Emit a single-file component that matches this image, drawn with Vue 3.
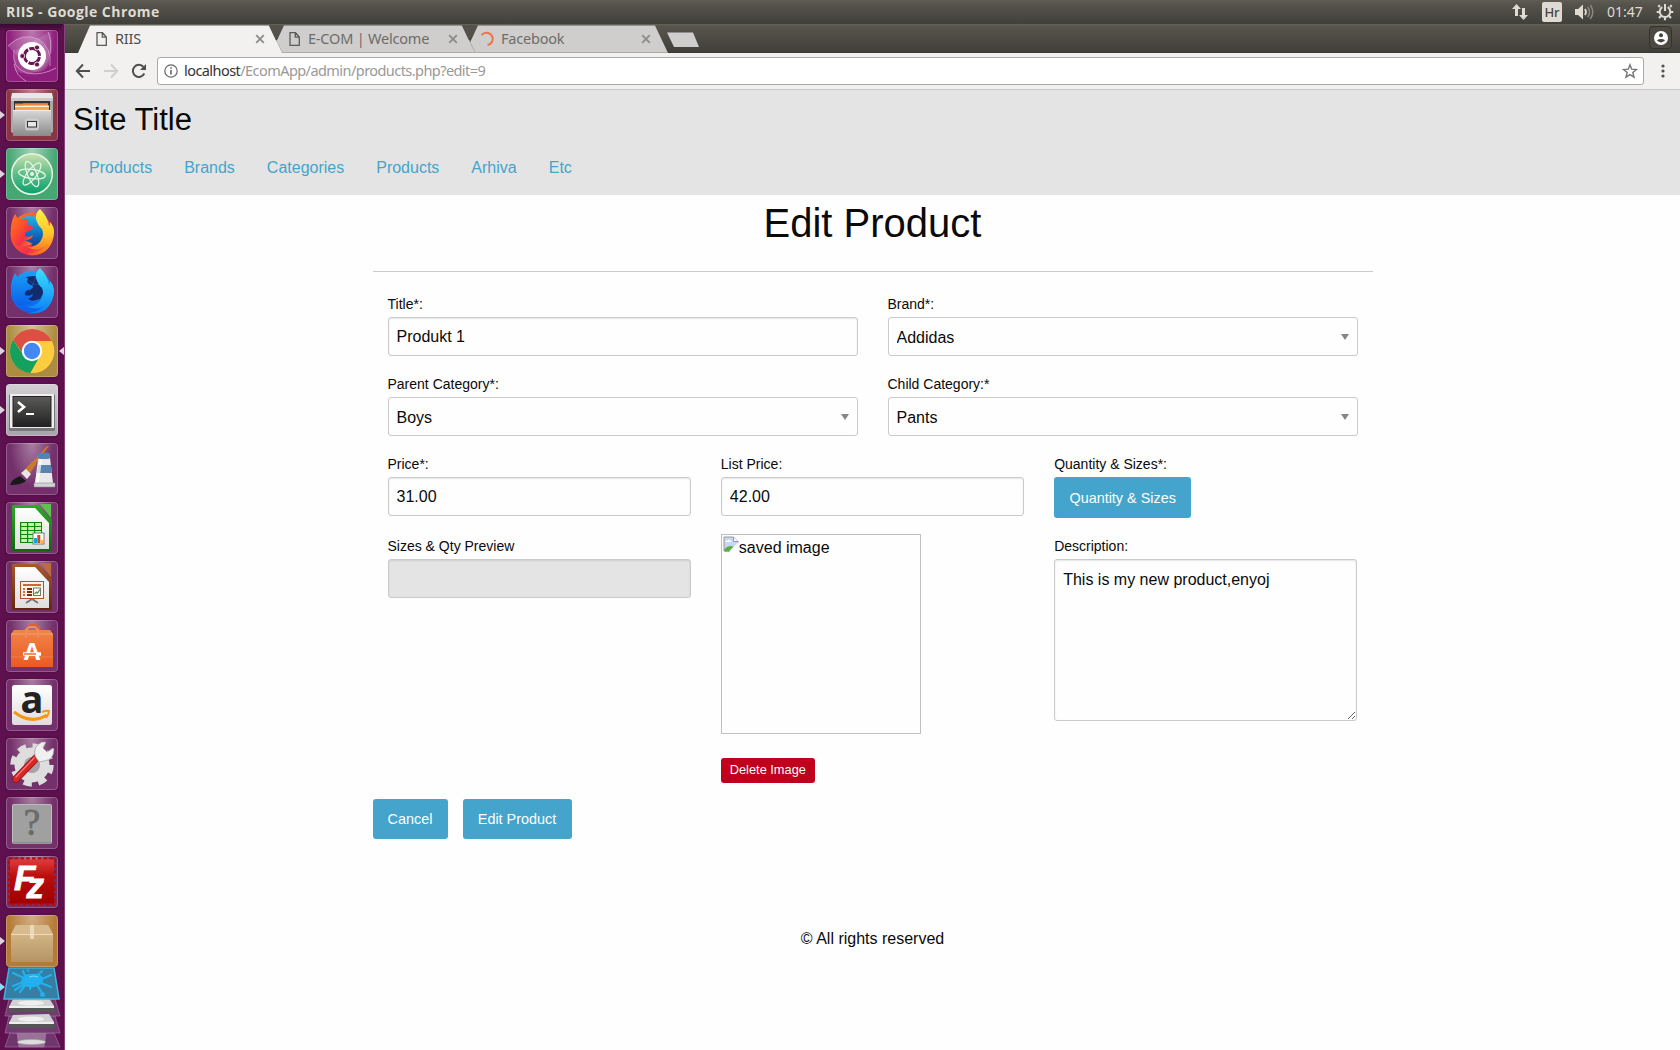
<script setup>
import { ref } from 'vue'

const tabs = [
  { title: 'RIIS', kind: 'page', active: true },
  { title: 'E-COM | Welcome', kind: 'page', active: false },
  { title: 'Facebook', kind: 'loading', active: false },
]
const nav = ['Products', 'Brands', 'Categories', 'Products', 'Arhiva', 'Etc']

const title = ref('Produkt 1')
const brand = ref('Addidas')
const parent = ref('Boys')
const child = ref('Pants')
const price = ref('31.00')
const listPrice = ref('42.00')
const sizes = ref('')
const description = ref('This is my new product,enyoj')
</script>

<template>
  <div class="desktop">
    <header class="panel">
      <span class="panel-title">RIIS - Google Chrome</span>
      <div class="indicators">
        <svg class="i-net" width="18" height="18" viewBox="0 0 18 18"><path d="M5.500 1 1 6h3v7h3V6h3zM12.500 17l4.500-5h-3V5h-3v7H8z" fill="#dfdbd2" /></svg>
        <span class="kbd">Hr</span>
        <svg class="i-vol" width="20" height="18" viewBox="0 0 20 18"><path d="M0 6h3l5-4.500v15L3 12H0z" fill="#dfdbd2" /><path d="M10 6q2 3 0 6" fill="none" stroke="#dfdbd2" stroke-width="1.800" /><path d="M12.700 4q3.600 5 0 10M15.300 2q5 7 0 14" fill="none" stroke="#8b887f" stroke-width="1.500" /></svg>
        <span class="clock">01:47</span>
        <svg class="i-gear" width="18" height="18" viewBox="0 0 18 18" fill="none" stroke="#dfdbd2"><path d="M6.300 4.200a5.300 5.300 0 1 0 5.400 0" stroke-width="2" /><path d="M9 1v7" stroke-width="2" /><path d="M3.900 3.900 2.300 2.300M14.100 3.900l1.600-1.600M3.500 9H.7M14.500 9h2.800M5 13l-2 2M13 13l2 2M9 14.500v2.800" stroke-width="2.200" /></svg>
      </div>
    </header>

    <div class="body">
      <aside class="launcher">
        <svg class="defs" width="0" height="0">
          <defs>
            <linearGradient id="silver" x1="0" y1="0" x2="0" y2="1"><stop offset="0" stop-color="#d8d8d8" /><stop offset="1" stop-color="#8a8a8a" /></linearGradient>
            <linearGradient id="atom" x1="0" y1="0" x2="0" y2="1"><stop offset="0" stop-color="#c9e2ae" /><stop offset=".5" stop-color="#5dbd88" /><stop offset="1" stop-color="#08a06e" /></linearGradient>
            <linearGradient id="fox" x1="0" y1="0" x2=".9" y2="1"><stop offset="0" stop-color="#ff7a2c" /><stop offset=".45" stop-color="#ff4f2a" /><stop offset=".7" stop-color="#f2304b" /><stop offset="1" stop-color="#ff8a20" /></linearGradient>
            <linearGradient id="flame" x1="0" y1="0" x2="0" y2="1"><stop offset="0" stop-color="#fff14a" /><stop offset=".55" stop-color="#ffc426" /><stop offset="1" stop-color="#ff6424" /></linearGradient>
            <linearGradient id="foxblue" x1="0" y1="0" x2="0" y2="1"><stop offset="0" stop-color="#1fb4ee" /><stop offset="1" stop-color="#0a3f9e" /></linearGradient>
            <linearGradient id="devfox" x1="0" y1="0" x2="0" y2="1"><stop offset="0" stop-color="#1a9df5" /><stop offset="1" stop-color="#0a5fe8" /></linearGradient>
            <linearGradient id="devflame" x1="0" y1="0" x2="0" y2="1"><stop offset="0" stop-color="#3be1fc" /><stop offset="1" stop-color="#0a7ff5" /></linearGradient>
            <linearGradient id="term" x1="0" y1="0" x2="0" y2="1"><stop offset="0" stop-color="#5a5a58" /><stop offset="1" stop-color="#222" /></linearGradient>
            <linearGradient id="calc" x1="0" y1="0" x2="0" y2="1"><stop offset="0" stop-color="#2fa82b" /><stop offset="1" stop-color="#0c6a0b" /></linearGradient>
            <linearGradient id="impress" x1="0" y1="0" x2="0" y2="1"><stop offset="0" stop-color="#a9592a" /><stop offset="1" stop-color="#63260b" /></linearGradient>
            <linearGradient id="bag" x1="0" y1="0" x2="0" y2="1"><stop offset="0" stop-color="#f08448" /><stop offset="1" stop-color="#ea5b22" /></linearGradient>
            <linearGradient id="paper" x1="0" y1="0" x2="0" y2="1"><stop offset="0" stop-color="#fff" /><stop offset="1" stop-color="#dedede" /></linearGradient>
            <linearGradient id="fz" x1="0" y1="0" x2="0" y2="1"><stop offset="0" stop-color="#e03a38" /><stop offset=".4" stop-color="#b80d0d" /><stop offset="1" stop-color="#a00000" /></linearGradient>
            <linearGradient id="box" x1="0" y1="0" x2="0" y2="1"><stop offset="0" stop-color="#dcbf90" /><stop offset="1" stop-color="#b59464" /></linearGradient>
            <radialGradient id="splash"><stop offset="0" stop-color="#2fb3ea" /><stop offset="1" stop-color="#1a9fe0" /></radialGradient>
          </defs>
        </svg>

        <div class="tile t-dash">
          <svg viewBox="0 0 52 52">
            <path d="M2 16Q16 2 32 10 45 18 43 34 37 45 26 41z" fill="#fff" opacity=".16" />
            <path d="M44 2Q50 24 38 37 24 48 10 41 5 30 10 20z" fill="#fff" opacity=".14" />
            <g fill="none" stroke="#f0cdea" stroke-opacity=".55"><path d="M2 16Q16 2 32 9 46 17 44 36" /><path d="M42 2Q46 10 44 24" /><path d="M8 20Q5 38 21 43 36 46 50 38" /><path d="M8 34Q10 46 20 51" /></g>
            <circle cx="26" cy="26" r="14" fill="#fff" />
            <circle cx="26" cy="26" r="7.500" fill="none" stroke="#681554" stroke-width="3" stroke-dasharray="14.200 1.500" transform="rotate(8 26 26)" />
            <g fill="#681554" stroke="#fff" stroke-width=".8"><circle cx="16.300" cy="26" r="2.500" /><circle cx="31" cy="17.500" r="2.500" /><circle cx="31" cy="34.500" r="2.500" /></g>
          </svg>
        </div>
        <div class="tile t-files run">
          <svg viewBox="0 0 52 52">
            <path d="M6 4h40l1 5H5z" fill="#e8e8e8" /><path d="M5 9h42v34l-2 1H7l-2-1z" fill="#aaa9a7" /><path d="M5 9h42v3H5z" fill="#c9c9c9" /><path d="M8 12h36v10H8z" fill="#333" />
            <path d="M17 14h25v3H17z" fill="#e0602a" /><path d="M9 14.500h33v2H9z" fill="#ef8440" /><path d="M9 16.500h34v1.500H9z" fill="#fff2da" /><path d="M9 18h34v3H9z" fill="#f6a552" />
            <path d="M7 21h38v26H7z" fill="url(#silver)" /><path d="M7 21.500h38" stroke="#eee" />
            <rect x="19.500" y="30" width="13" height="11" rx="2" fill="#c5c5c5" stroke="#ddd" stroke-width=".6" /><rect x="21.500" y="32.500" width="9" height="5.500" fill="#e8e8e8" stroke="#333" />
          </svg>
        </div>
        <div class="tile t-atom run">
          <svg viewBox="0 0 52 52">
            <circle cx="26" cy="26" r="20.300" fill="url(#atom)" stroke="#e9f3e4" stroke-width="1.500" />
            <g fill="none" stroke="#eaf6e8" stroke-width="1.200"><ellipse cx="26" cy="26" rx="13.500" ry="4.600" transform="rotate(8 26 26)" /><ellipse cx="26" cy="26" rx="13.500" ry="4.600" transform="rotate(67 26 26)" /><ellipse cx="26" cy="26" rx="13.500" ry="4.600" transform="rotate(127 26 26)" /></g>
            <circle cx="26" cy="26" r="2" fill="#eaf6e8" />
          </svg>
        </div>
        <div class="tile">
          <svg viewBox="0 0 52 52">
            <circle cx="26" cy="27" r="21.500" fill="url(#fox)" />
            <path d="M15 12l6-3 14 1 4 16-4 10-8 3-9-5-3-9z" fill="url(#foxblue)" />
            <path d="M9 7q2 4 5 6 4-2 8-1-2 4 1 6l4 2q0 3-5 4-4 2-3 5 4 2 8-1-1 5-8 5l8 4-14 3Q5 37 5 25q-1-9 4-18z" fill="url(#fox)" />
            <path d="M34 2q-5 4-4 10 2 7 6 10 3 7-3 14-5 5-12 4 10 5 17 0-7 7-17 7 18 4 25-12 5-13-2-20 0 3-1 4-1-9-9-17z" fill="url(#flame)" />
          </svg>
        </div>
        <div class="tile">
          <svg viewBox="0 0 52 52">
            <circle cx="26" cy="26" r="21" fill="url(#devfox)" />
            <path d="M17 13q7-5 16-2l5 15-4 7-8 2-9-5-3-9z" fill="#132a6c" />
            <path d="m20 12 7 6 9 1M27 18l-4 8M30 10l-3 8" fill="none" stroke="#2355a5" stroke-width=".7" />
            <path d="M9 7q2 4 5 6 4-2 8-1-2 4 1 6l4 2q0 3-5 4-4 2-3 5 4 2 8-1-1 5-8 5l8 4-14 3Q5 37 5 25q-1-9 4-18z" fill="url(#devfox)" />
            <path d="M34 2q-5 4-4 10 2 7 6 10 3 7-3 14-5 5-12 4 10 5 17 0-7 7-17 7 18 3 25-12 5-13-2-20 0 3-1 4-1-9-9-17z" fill="url(#devflame)" />
          </svg>
        </div>
        <div class="tile t-chrome run focus">
          <svg viewBox="0 0 52 52">
            <circle cx="26" cy="26" r="22" fill="#fdcc3f" />
            <path d="M7 15a22 22 0 0 1 38.700 1H26L18 30z" fill="#dd4f43" />
            <path d="M7 15a22 22 0 0 0 17.500 33L34 31l-15 1z" fill="#16a05d" />
            <path d="M26 16h19.700a22 22 0 0 1-21.200 32L35 30z" fill="#fdcc3f" />
            <circle cx="26" cy="26" r="10.200" fill="#fff" /><circle cx="26" cy="26" r="8.200" fill="#4587f0" />
          </svg>
        </div>
        <div class="tile t-term run">
          <svg viewBox="0 0 52 52">
            <rect x="3" y="10" width="46" height="37" rx="1.500" fill="#77777a" /><rect x="4" y="10" width="44" height="34" fill="#eee" /><rect x="7" y="12.500" width="38" height="30" fill="url(#term)" stroke="#222" />
            <path d="m12 18 6 5-6 5" fill="none" stroke="#fff" stroke-width="2.600" /><path d="M20 30h8" stroke="#fff" stroke-width="2" />
          </svg>
        </div>
        <div class="tile">
          <svg viewBox="0 0 52 52">
            <path d="M43 3 26 25l-3-2L41 3z" fill="#cc7a28" /><path d="M27 18l-9 9 5 5 7-11z" fill="#c77a2c" /><path d="M15 30l5-4 5 5-4 5z" fill="#e7e7e7" /><path d="M14 33l6 5q-5 4-16 4 2-6 10-9z" fill="#191919" />
            <path d="M33 15h11l3 25H29z" fill="#e9e9ec" /><rect x="32" y="10" width="12" height="6" rx="2" fill="#5583b3" /><path d="M32 22h13l1 8H31z" fill="#5783ae" /><path d="M32 16h4l-3 24h-4z" fill="#fff" opacity=".7" /><path d="M28 40h21v4H28z" fill="#d3d3d5" stroke="#8b8b8b" stroke-width=".6" />
          </svg>
        </div>
        <div class="tile">
          <svg viewBox="0 0 52 52">
            <path d="M7 3h25l14 15v29q0 2-2 2H8q-2 0-2-2V4z" fill="url(#calc)" /><path d="M34 2h11v14z" fill="#5fc152" /><path d="M9 6h20l14 15v26H9z" fill="url(#paper)" />
            <path d="M14 20h22v21H14z" fill="#0d860b" /><g fill="#c5f2a8"><path v-for="n in 15" :key="n" :d="`M${15.200 + ((n - 1) % 3) * 7} ${21 + Math.floor((n - 1) / 3) * 4}h5.800v3h-5.800z`" /></g>
            <rect x="27" y="31" width="11" height="11" fill="#fff" stroke="#777" /><path d="M28 36h3v5h-3z" fill="#15a0e0" /><path d="M31.300 33h3v8h-3z" fill="#d4491a" /><path d="M34.600 38h2.800v3h-2.800z" fill="#f3bb16" />
          </svg>
        </div>
        <div class="tile">
          <svg viewBox="0 0 52 52">
            <path d="M7 3h25l14 15v29q0 2-2 2H8q-2 0-2-2V4z" fill="url(#impress)" /><path d="M34 2h11v14z" fill="#bb6d3c" /><path d="M9 6h20l14 15v26H9z" fill="url(#paper)" />
            <path d="m20 42 6-4 6 4" fill="none" stroke="#777" stroke-width="2" /><rect x="14.500" y="20.500" width="23" height="17" fill="#fff4e8" stroke="#b25122" /><path d="M17 24h18" stroke="#cc6a33" stroke-width="2" />
            <path d="M17 28h2M17 31h2M17 34h2" stroke="#d46e30" stroke-width="2" /><path d="M21 28h5M21 31h5M21 34h5" stroke="#7a2e0c" stroke-width="2" /><rect x="27.500" y="27" width="7" height="7.500" fill="#fff" stroke="#777" /><path d="m28.500 33 2-2 1 1 2.500-3.500" fill="none" stroke="#2aa02a" stroke-width="1.200" />
          </svg>
        </div>
        <div class="tile">
          <svg viewBox="0 0 52 52">
            <path d="M22 13V7l3-2h5l3 2v6" fill="none" stroke="#d9623a" stroke-width="2.500" /><path d="M8 10h36l3 4v33H5V14z" fill="url(#bag)" /><path d="M5 14h42" stroke="#f5a26f" /><path d="M20 18V10l3-3h6l3 3v8" fill="none" stroke="#ef8a62" stroke-width="2.200" />
            <path d="M5 37h42" stroke="#f08a5c" stroke-width=".7" />
            <text x="26" y="39.500" text-anchor="middle" class="a-glyph">A</text><path d="M17 34h18" stroke="#fff" stroke-width="3.500" /><path d="M18 34h12" stroke="#ec642d" stroke-width="1.400" />
          </svg>
        </div>
        <div class="tile">
          <svg viewBox="0 0 52 52">
            <rect x="6" y="6" width="40" height="40" rx="2.500" fill="url(#paper)" />
            <text x="26" y="34" text-anchor="middle" class="amz-glyph">a</text>
            <path d="M8 33q17 13 33 3" fill="none" stroke="#f79514" stroke-width="3" /><path d="M36 33q5-2 7-1 0 3-3 7" fill="none" stroke="#f79514" stroke-width="2" />
          </svg>
        </div>
        <div class="tile">
          <svg viewBox="0 0 52 52">
            <circle cx="26" cy="27" r="18.500" fill="none" stroke="#dcdcdc" stroke-width="6.500" stroke-dasharray="8.100 6.430" /><circle cx="26" cy="27" r="12.500" fill="none" stroke="#dedede" stroke-width="10" /><circle cx="26" cy="27" r="8" fill="#a8a3a8" />
            <path d="M10 41 31 19" stroke="#8c1212" stroke-width="7.500" stroke-linecap="round" /><path d="M10 41 31 19" stroke="#d92626" stroke-width="6" stroke-linecap="round" /><path d="M10 39 28 20" stroke="#f08080" stroke-width="1.200" stroke-linecap="round" />
            <path d="M29 18q-2-10 7-14h4l-3 6 4 4 6-4 1 1q0 11-10 12l-5 1z" fill="#f0f0f0" stroke="#999" stroke-width=".7" />
          </svg>
        </div>
        <div class="tile">
          <svg viewBox="0 0 52 52"><rect x="6.500" y="7.500" width="39" height="39" rx="1" fill="#a0a0a0" stroke="#bcbcbc" /><path d="M7 46h38" stroke="#777" /><text x="26" y="38" text-anchor="middle" class="q-glyph">?</text></svg>
        </div>
        <div class="tile">
          <svg viewBox="0 0 52 52">
            <rect x="3" y="2.500" width="46" height="46" fill="none" stroke="#b50c0c" stroke-width="2.500" stroke-dasharray="3.500 2.250" /><rect x="4" y="3.500" width="44" height="44" fill="url(#fz)" />
            <text x="8" y="34" class="fz-glyph">F<tspan dx="-9" dy="8" class="z">z</tspan></text>
          </svg>
        </div>
        <div class="tile t-box run">
          <svg viewBox="0 0 52 52"><path d="M10 10h32l5 10v27H5V20z" fill="url(#box)" /><path d="M10 10h32l5 9H5z" fill="#d6bb91" /><path d="M5 19.500h42" stroke="#efd9b2" /><path d="M24 10h4v14h-4z" fill="#f1e3c8" opacity=".75" /></svg>
        </div>

        <svg class="stack" width="65" height="83" viewBox="0 0 65 83">
          <g stroke="#a87aa4" stroke-opacity=".6"><path d="M10 66h44l6 14H5z" fill="#6f356e" /><path d="M17 66h29l-2 14H19z" fill="#9a7299" /><ellipse cx="31.500" cy="75" rx="14" ry="2.500" fill="#ddd" stroke="#aaa" />
            <path d="M9 49h46l5 17H5z" fill="#713a70" /><path d="M9 32h46l5 17H5z" fill="#713a70" /></g>
          <g><path d="m13 32 36-1 5 8v4H9v-3z" fill="#d2d2d2" /><ellipse cx="31" cy="36" rx="13" ry="2.500" fill="#efefef" /><path d="M9 41h46v4H9z" fill="#555" /><path d="M9 40h45" stroke="#eee" stroke-width="2" />
            <path d="m13 48 36-1 5 8v4H9v-3z" fill="#d2d2d2" /><ellipse cx="31" cy="52" rx="13" ry="2.500" fill="#efefef" /><path d="M9 57h46v4H9z" fill="#555" /><path d="M9 56h45" stroke="#eee" stroke-width="2" /></g>
          <path d="M9 1h45l5 31H4z" fill="#347fa3" stroke="#3db6e6" stroke-width="1.500" />
          <path d="M24 9q4-3 14-2 6 2 5 7-2 5-9 6-9 1-12-3-2-5 2-8z" fill="#22b0ee" />
          <g fill="none" stroke="#22b0ee" stroke-width="2.200" stroke-linecap="round"><path d="M24 11 13 6M25 9l-2-5M38 8l4-4M42 12l9-4M41 16l10 4M37 18l5 8M31 19l-1 3M26 17l-6 8M23 15l-10 4M24 17l-9 6" /></g>
          <circle cx="42.500" cy="27.500" r="2.500" fill="#22b0ee" /><circle cx="28" cy="3.500" r="1.300" fill="#22b0ee" /><path d="M29 10q5-2 9 0" fill="none" stroke="#7fd6f7" />
          <path d="M0 16v8l5-4z" fill="#8fdcf8" />
        </svg>
      </aside>

      <main class="browser">
        <div class="tabstrip">
          <svg class="tab-shapes" width="1615" height="29" viewBox="65 0 1615 29">
            <path d="M668 29 655 1.500H478L465 29z" fill="#cfcecc" />
            <path d="M475 29 462 1.500H284L271 29z" fill="#cfcecc" /><path d="M469 16l6.500 13" stroke="#adacaa" />
            <path d="M65 28.500h1615" stroke="#adaba8" />
            <path d="M668 28.500h1012M65 28.500h14" stroke="#393732" />
            <path d="M276 16l6.500 13" stroke="#adacaa" />
            <path d="M78 29l12-27.500h179L282 29z" fill="#f2f1f0" />
            <path d="M667 8.500h26l6 14.500h-25z" fill="#cfcecc" />
            <path d="M269 1.500 276 16l6-14.500z" fill="#53514a" /><path d="M462 1.500 469 16l7-14.500z" fill="#53514a" />
          </svg>
          <div class="tabs">
            <div v-for="tab in tabs" :key="tab.title" class="tab" :class="{ active: tab.active }">
              <svg v-if="tab.kind === 'page'" width="14" height="16" viewBox="0 0 14 16" fill="none" stroke="#5a5a5a" stroke-width="1.300"><path d="M2 1.700h5.500L11.300 6v8.300H2zM7.300 2v4.200h4" /></svg>
              <svg v-else width="14" height="16" viewBox="0 0 14 16" fill="none" stroke="#ee7548" stroke-width="2"><path d="M.5 4.200A6.200 6.200 0 1 1 6.500 14" /></svg>
              <span class="tab-title">{{ tab.title }}</span>
              <svg class="x" width="10" height="10" viewBox="0 0 10 10" stroke="#8d8c8a" stroke-width="1.800"><path d="m1.200 1.200 7.600 7.600m0-7.600L1.200 8.800" /></svg>
            </div>
          </div>
          <div class="profile"><svg width="14" height="14" viewBox="0 0 14 14"><circle cx="7" cy="7" r="7" fill="#fff" /><circle cx="7" cy="4.300" r="2" fill="#45433d" /><path d="M2.800 9.300Q7 6.500 11.200 9.300 7 13.500 2.800 9.300z" fill="#45433d" /></svg></div>
        </div>

        <div class="toolbar">
          <svg class="nav-i" width="16" height="16" viewBox="0 0 16 16" fill="none" stroke="#4f4f4f" stroke-width="2"><path d="M15 8H2.500M8 1.500 1.800 8 8 14.500" /></svg>
          <svg class="nav-i fwd" width="16" height="16" viewBox="0 0 16 16" fill="none" stroke="#cfcfcf" stroke-width="2"><path d="M1 8h12.500M8 1.500 14.200 8 8 14.500" /></svg>
          <svg class="nav-i reload" width="16" height="16" viewBox="0 0 16 16"><path d="M13.300 10.500A6 6 0 1 1 12.500 4" fill="none" stroke="#4f4f4f" stroke-width="2" /><path d="M15 1v6H9z" fill="#4f4f4f" /></svg>
          <div class="omnibox">
            <svg width="14" height="14" viewBox="0 0 14 14" fill="none" stroke="#666"><circle cx="7" cy="7" r="6.200" stroke-width="1.200" /><path d="M7 6v4.500M7 3.300v1.500" stroke-width="1.600" /></svg>
            <span class="url"><b>localhost</b>/EcomApp/admin/products.php?edit=9</span>
            <svg class="star" width="16" height="16" viewBox="0 0 16 16"><path d="m8 1.800 1.700 4.400 4.800.3-3.700 3 1.200 4.700L8 11.600l-4 2.600 1.200-4.700-3.700-3 4.800-.3z" fill="none" stroke="#757575" stroke-width="1.400" /></svg>
          </div>
          <svg class="menu" width="4" height="14" viewBox="0 0 4 14" fill="#4f4f4f"><circle cx="2" cy="2" r="1.600" /><circle cx="2" cy="7" r="1.600" /><circle cx="2" cy="12" r="1.600" /></svg>
        </div>

        <section class="page">
          <div class="site-header">
            <h3>Site Title</h3>
            <nav><a v-for="(item, i) in nav" :key="i">{{ item }}</a></nav>
          </div>
          <h2>Edit Product</h2>
          <form class="container" @submit.prevent>
            <div class="row two">
              <label>Title*:<input v-model="title" type="text" /></label>
              <label>Brand*:<span class="select"><select v-model="brand"><option>Addidas</option></select><i></i></span></label>
            </div>
            <div class="row two">
              <label>Parent Category*:<span class="select"><select v-model="parent"><option>Boys</option></select><i></i></span></label>
              <label>Child Category:*<span class="select"><select v-model="child"><option>Pants</option></select><i></i></span></label>
            </div>
            <div class="row three prices">
              <label>Price*:<input v-model="price" type="text" /></label>
              <label>List Price:<input v-model="listPrice" type="text" /></label>
              <div class="field"><label>Quantity &amp; Sizes*:</label><button type="button" class="btn qty">Quantity &amp; Sizes</button></div>
            </div>
            <div class="row three details">
              <label>Sizes &amp; Qty Preview<input v-model="sizes" type="text" readonly class="readonly" /></label>
              <div class="saved">
                <div class="img">
                  <svg width="16" height="16" viewBox="0 0 16 16"><path d="M1 1h9.500L15 5.500V8L8 15H1z" fill="#c6d6f6" stroke="#9a9a9a" /><path d="M10.500 1v4.500H15" fill="#fff" stroke="#9a9a9a" /><path d="M2.500 5.500Q3 4 4.500 4.500 5.500 2.500 7 4.500q1.500 0 1.500 1.500h-6z" fill="#fff" /><path d="M1.500 15.500V13q4-4.500 9-2.500l-4 5z" fill="#5dad3b" /><path d="M7 15.500 15.500 7" stroke="#fff" stroke-width="1.500" /></svg><span>saved image</span>
                </div>
                <button type="button" class="delete">Delete Image</button>
              </div>
              <label>Description:<textarea v-model="description"></textarea></label>
            </div>
            <div class="actions"><button type="button" class="btn cancel">Cancel</button><button type="submit" class="btn submit">Edit Product</button></div>
          </form>
          <footer>© All rights reserved</footer>
        </section>
      </main>
    </div>
  </div>
</template>

<style>
body { margin: 0; overflow: hidden; }
</style>

<style scoped>
* { box-sizing: border-box; }
.desktop { width: 1680px; height: 1050px; display: flex; flex-direction: column; overflow: hidden; background: #fefefe; font-family: "Liberation Sans", Arial, sans-serif; color: #0a0a0a; }
.panel { height: 24px; flex: none; display: flex; align-items: center; justify-content: space-between; padding: 0 6px 1px 6px; background: linear-gradient(#605e53 0, #57554d 3px, #403f3a 100%); color: #dfdbd2; font-family: "Noto Sans", sans-serif; font-size: 14px; }
.panel-title { font-family: "Open Sans", sans-serif; font-weight: 700; letter-spacing: .45px; white-space: nowrap; }
.indicators { display: flex; align-items: center; }
.kbd { width: 20px; height: 20px; margin: 0 13px 0 13px; border-radius: 2px; background: #dfdbd2; color: #45433d; text-align: center; line-height: 20px; font-size: 13px; font-weight: 500; }
.clock { margin: 0 12px 0 12px; width: 37px; white-space: nowrap; }
.body { flex: 1; min-height: 0; display: flex; }

.launcher { width: 65px; flex: none; display: flex; flex-direction: column; align-items: flex-start; gap: 7px; padding: 6px 0 0 6px; border-right: 1px solid #84437d; background: linear-gradient(#380b30 0, #5f104f 7px, #5f104f 100%); box-shadow: inset -2px 0 #59104b; }
.defs { position: absolute; }
.tile { position: relative; width: 52px; height: 52px; flex: none; border-radius: 4px; background: radial-gradient(ellipse at 50% 0, rgba(255,255,255,.38), rgba(255,255,255,0) 60%), #74306a; box-shadow: inset 0 0 0 1px rgba(255,255,255,.22), 0 0 3px rgba(0,0,0,.25); }
.tile svg { display: block; width: 52px; height: 52px; overflow: visible; }
.tile.run::before { content: ""; position: absolute; left: -6px; top: 22px; border-left: 5px solid #dcd4dc; border-top: 4px solid transparent; border-bottom: 4px solid transparent; }
.tile.focus::after { content: ""; position: absolute; right: -6px; top: 22px; border-right: 5px solid #dcd4dc; border-top: 4px solid transparent; border-bottom: 4px solid transparent; }
.t-dash { background: radial-gradient(ellipse at 50% 0, rgba(255,255,255,.4), rgba(255,255,255,0) 65%), #8f1f7c; }
.t-files { background: radial-gradient(ellipse at 50% 0, rgba(255,255,255,.4), rgba(255,255,255,0) 65%), #8a3545; }
.t-atom { background: radial-gradient(ellipse at 50% 0, rgba(255,255,255,.5), rgba(255,255,255,0) 65%), #46a772; }
.t-chrome { background: radial-gradient(ellipse at 50% 0, rgba(255,255,255,.45), rgba(255,255,255,0) 65%), #ac8c40; }
.t-term { background: linear-gradient(#d3cdd4, #a9a4ab); }
.t-box { background: radial-gradient(ellipse at 50% 0, rgba(255,255,255,.4), rgba(255,255,255,0) 65%), #b57a35; }
.stack { flex: none; margin: -7px 0 0 -6px; }
.a-glyph { font: 700 24px "Open Sans", sans-serif; fill: #fff; }
.amz-glyph { font: 700 38px "Noto Sans", sans-serif; fill: #222; }
.q-glyph { font: 37px "Liberation Serif", serif; fill: #6b6b6b; stroke: #6b6b6b; stroke-width: .8; }
.fz-glyph { font: italic 700 35px "Liberation Sans", sans-serif; fill: #fff; stroke: #fff; stroke-width: .8; }
.z { font-size: 35px; }

.browser { flex: 1; min-width: 0; display: flex; flex-direction: column; }
.tabstrip { position: relative; height: 29px; flex: none; display: flex; justify-content: space-between; background: linear-gradient(#68665a 0, #57554c 2px, #403e39 100%); font-family: "Noto Sans", sans-serif; font-size: 14.500px; }
.tab-shapes { position: absolute; left: 0; top: 0; }
.tabs { position: relative; display: flex; padding-left: 30px; }
.tab { display: flex; align-items: center; width: 193px; height: 29px; color: #6d6c6a; }
.tab.active { color: #4d4d4d; }
.tab-title { flex: 1; margin: -2px 0 0 6px; white-space: nowrap; letter-spacing: -.2px; }
.tab .x { margin-right: 23px; }
.profile { position: relative; width: 23px; height: 23px; margin: 2px 8px 0 0; border: 1px solid #34322e; border-radius: 4px; display: flex; align-items: center; justify-content: center; background: #4b4942; }
.toolbar { height: 37px; flex: none; display: flex; align-items: center; padding: 0 15px 0 10px; background: #f2f1f0; border-bottom: 1px solid #cbcac9; }
.nav-i { margin-right: 12px; }
.nav-i.reload { margin-right: 10px; }
.omnibox { flex: 1; height: 28px; display: flex; align-items: center; padding: 0 5px 0 6px; border: 1px solid #a9a8a7; border-radius: 3px; background: #fff; margin-right: 17px; }
.url { flex: 1; margin: -2px 0 0 6px; color: #999; font: 14.500px "Noto Sans", sans-serif; letter-spacing: -.56px; white-space: nowrap; }
.url b { font-weight: 400; color: #333; }

.page { flex: 1; background: #fefefe; }
.site-header { height: 105px; background: #e4e4e4; padding: 8px 8px 0; }
h3 { margin: 0; font-weight: 400; font-size: 31px; line-height: 43px; }
nav { display: flex; margin-top: 8px; }
nav a { padding: 11px 16px; line-height: 16px; font-size: 16px; color: #44a4cb; }
h2 { margin: 0; font-weight: 400; font-size: 40px; line-height: 56px; text-align: center; }
.container { width: 1000px; margin: 20px auto 0; border-top: 1px solid #cacaca; padding-top: 20px; }
.row { display: grid; padding: 0 15px; column-gap: 30px; align-items: start; }
.two { grid-template-columns: 1fr 1fr; height: 80px; }
.three { grid-template-columns: repeat(3, 303.330px); column-gap: 30px; }
.prices { height: 82px; }
.details { height: 240px; }
label { display: block; font-size: 14px; line-height: 25px; }
input, select, textarea { display: block; width: 100%; height: 39px; margin: 0; padding: 8px; border: 1px solid #cacaca; border-radius: 3px; background: #fefefe; color: #0a0a0a; font: 16px/20px "Liberation Sans", Arial, sans-serif; box-shadow: inset 0 1px 2px rgba(10,10,10,.1); outline: 0; }
input { padding: 8px; }
select { appearance: none; box-shadow: none; padding: 9px 8px 7px; }
.select { position: relative; display: block; }
.select i { position: absolute; right: 9px; top: 17px; border-top: 6px solid #868686; border-left: 4px solid transparent; border-right: 4px solid transparent; }
.readonly { background: #e4e4e4; }
textarea { height: 162px; padding: 8px; line-height: 23px; }
.btn { border: 0; border-radius: 3px; background: #44a4cb; color: #fefefe; font: 14.400px/14px "Liberation Sans", Arial, sans-serif; height: 40px; padding: 0; }
.qty { display: block; width: 137px; height: 41px; }
.img { width: 200px; height: 200px; margin-bottom: 24px; border: 1px solid #c0c0c0; padding: 1px; display: flex; align-items: flex-start; font-size: 16px; line-height: 24px; }
.delete { display: block; width: 94px; height: 25px; border: 0; border-radius: 3px; background: #c0001d; color: #fefefe; font: 12.800px/13px "Liberation Sans", Arial, sans-serif; padding: 0 0 2px; }
.actions { display: flex; gap: 15px; margin-top: 25px; }
.cancel { width: 75px; }
.submit { width: 109px; }
footer { margin-top: 88px; text-align: center; font-size: 16px; line-height: 24px; }
</style>
